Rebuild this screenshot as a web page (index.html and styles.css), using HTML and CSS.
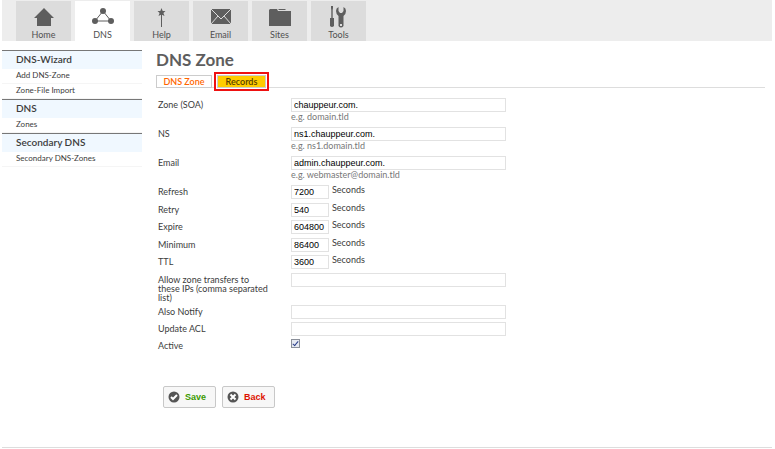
FILE: index.html
```html
<!DOCTYPE html>
<html lang="en">
<head>
    <meta charset="UTF-8">
    <meta name="viewport" content="width=device-width, initial-scale=1.0">
    <title>DNS Zone</title>
    <link rel="stylesheet" href="styles.css">
</head>
<body>

    <nav class="topnav">
        <a href="#">
            <svg viewBox="0 0 22 22"><path d="M11 2 L21 12 H18 V20 H4 V12 H1 Z"/></svg>
            Home
        </a>
        <a href="#" class="active">
            <svg viewBox="0 0 22 22"><path class="line" d="M11 5 L3 15 H19 Z"/><circle cx="11" cy="5" r="3"/><circle cx="3" cy="15" r="3"/><circle cx="19" cy="15" r="3"/></svg>
            DNS
        </a>
        <a href="#">
            <svg viewBox="0 0 22 22"><path d="M10.5 2 L11.7 5 H14.5 L12.4 7 L13.5 10 L11 8.7 V21 H10 V8.7 L7.5 10 L8.6 7 L6.5 5 H9.3 Z"/></svg>
            Help
        </a>
        <a href="#">
            <svg viewBox="0 0 22 22"><path d="M1 3 H21 V18 H1 Z"/><path class="fold" d="M1 3 L11 13 L21 3 M1 18 L8 10 M21 18 L14 10"/></svg>
            Email
        </a>
        <a href="#">
            <svg viewBox="0 0 22 22"><path d="M0 4 L1 3 H8 L9 5 H22 V20 H0 Z"/><path d="M9 3 H16 L17 4 H10 Z"/></svg>
            Sites
        </a>
        <a href="#">
            <svg viewBox="0 0 22 22"><path d="M3 0 H5 V2 L4.7 4 V12 H6 V20 Q4 22 2 20 V12 H3.3 V4 L3 2 Z"/><path fill-rule="evenodd" d="M10.5 1 V5 L12 7 H14 L15.5 5 V1 Q18 2 18 5 Q18 8 15.5 10 V20 Q13 23 10.5 20 V10 Q8 8 8 5 Q8 2 10.5 1 Z M12 18 V20 H14 V18 Z"/></svg>
            Tools
        </a>
    </nav>

    <div class="page">
        <aside class="sidebar">
            <section>
                <h2>DNS-Wizard</h2>
                <a href="#">Add DNS-Zone</a>
                <a href="#">Zone-File Import</a>
            </section>
            <section>
                <h2>DNS</h2>
                <a href="#">Zones</a>
            </section>
            <section>
                <h2>Secondary DNS</h2>
                <a href="#">Secondary DNS-Zones</a>
            </section>
        </aside>

        <main>
            <h1>DNS Zone</h1>
            <div class="tabs">
                <a href="#" class="tab">DNS Zone</a>
                <div class="marked"><a href="#" class="tab selected">Records</a></div>
            </div>

            <form>
                <div class="fields hinted">
                    <div class="row">
                        <label for="soa">Zone (SOA)</label>
                        <div class="control">
                            <input type="text" id="soa" value="chauppeur.com.">
                            <small>e.g. domain.tld</small>
                        </div>
                    </div>
                    <div class="row">
                        <label for="ns">NS</label>
                        <div class="control">
                            <input type="text" id="ns" value="ns1.chauppeur.com.">
                            <small>e.g. ns1.domain.tld</small>
                        </div>
                    </div>
                    <div class="row">
                        <label for="email">Email</label>
                        <div class="control">
                            <input type="text" id="email" value="admin.chauppeur.com.">
                            <small>e.g. webmaster@domain.tld</small>
                        </div>
                    </div>
                </div>

                <div class="fields timing">
                    <div class="row">
                        <label for="refresh">Refresh</label>
                        <div class="control"><input type="text" id="refresh" value="7200"><span>Seconds</span></div>
                    </div>
                    <div class="row">
                        <label for="retry">Retry</label>
                        <div class="control"><input type="text" id="retry" value="540"><span>Seconds</span></div>
                    </div>
                    <div class="row">
                        <label for="expire">Expire</label>
                        <div class="control"><input type="text" id="expire" value="604800"><span>Seconds</span></div>
                    </div>
                    <div class="row">
                        <label for="minimum">Minimum</label>
                        <div class="control"><input type="text" id="minimum" value="86400"><span>Seconds</span></div>
                    </div>
                    <div class="row">
                        <label for="ttl">TTL</label>
                        <div class="control"><input type="text" id="ttl" value="3600"><span>Seconds</span></div>
                    </div>
                </div>

                <div class="fields access">
                    <div class="row">
                        <label for="xfer">Allow zone transfers to these IPs (comma separated list)</label>
                        <div class="control"><input type="text" id="xfer"></div>
                    </div>
                    <div class="row">
                        <label for="notify">Also Notify</label>
                        <div class="control"><input type="text" id="notify"></div>
                    </div>
                    <div class="row">
                        <label for="acl">Update ACL</label>
                        <div class="control"><input type="text" id="acl"></div>
                    </div>
                    <div class="row">
                        <label for="active">Active</label>
                        <div class="control"><input type="checkbox" id="active" checked></div>
                    </div>
                </div>

                <div class="buttons">
                    <button type="button" class="save">
                        <svg viewBox="0 0 12 12"><circle cx="6" cy="6" r="5.5"/><path d="M3 6 L5 8 L9 4"/></svg>
                        Save
                    </button>
                    <button type="button" class="back">
                        <svg viewBox="0 0 12 12"><circle cx="6" cy="6" r="5.5"/><path d="M3.5 3.5 L8.5 8.5 M8.5 3.5 L3.5 8.5"/></svg>
                        Back
                    </button>
                </div>
            </form>
        </main>
    </div>

    <footer></footer>

</body>
</html>
```
FILE: styles.css
```css
*, *::after, *::before{
    margin: 0;
    padding: 0;
    box-sizing: border-box;
}
:root{
    --text: #3c3c3c;
    --icon: #5e5e5e;
    --line: #ddd;
    --input-line: #e2e2e2;
}
body{
    background-color: #fff;
    color: var(--text);
    font-family: Lato, 'Trebuchet MS', sans-serif;
    font-size: 9px;
    padding: 0 3px 0 2px;
}
a{
    color: inherit;
    text-decoration: none;
}

/* top navigation */
.topnav{
    display: flex;
    gap: 4px;
    height: 41px;
    padding: 1px 14px 0;
    background-color: #ededed;
}
.topnav a{
    width: 55px;
    display: flex;
    flex-direction: column;
    align-items: center;
    padding-top: 5px;
    background-color: #dcdcdc;
    color: #505050;
    line-height: 13px;
}
.topnav a.active{
    background-color: #fff;
}
.topnav svg{
    width: 22px;
    height: 22px;
    fill: var(--icon);
}
.topnav .line{
    fill: none;
    stroke: var(--icon);
    stroke-width: 1;
}
.topnav .fold{
    fill: none;
    stroke: #dcdcdc;
    stroke-width: 1;
}

.page{
    display: flex;
    gap: 14px;
}

/* sidebar */
.sidebar{
    width: 140px;
    padding-top: 9px;
}
.sidebar section{
    border-top: 1px solid #777;
}
.sidebar h2{
    height: 18px;
    padding-left: 14px;
    background-color: #f0f8ff;
    font-size: 10px;
    font-weight: 600;
    line-height: 16px;
}
.sidebar a{
    display: block;
    height: 15px;
    padding-left: 14px;
    border-bottom: 1px solid #f5f5f5;
    font-size: 8px;
    line-height: 12px;
}

/* content */
main{
    flex: 1;
    padding: 8px 7px 0 0;
}
h1{
    color: #5e5e5e;
    font-size: 17px;
    line-height: 22px;
}
.tabs{
    display: flex;
    align-items: center;
    gap: 2px;
    height: 18px;
    margin-top: 1px;
    background: linear-gradient(var(--line), var(--line)) 0 15px / 100% 1px no-repeat;
}
.tab{
    display: block;
    width: 56px;
    border: 1px solid #ccc;
    background-color: #fff;
    color: #ff6600;
    font-weight: 600;
    line-height: 11px;
    text-align: center;
}
.marked{
    padding: 1px;
    border: 2px solid #e11;
    background-color: #fff;
}
.tab.selected{
    width: 49px;
    background-color: #fc0;
    color: #553c00;
}

form{
    padding: 8px 0 0 2px;
}
.fields{
    display: grid;
}
.hinted{
    grid-auto-rows: 29px;
}
.timing{
    height: 88px;
    grid-template-rows: repeat(5, 1fr);
}
.access{
    row-gap: 3px;
}
.row{
    display: grid;
    grid-template-columns: 110px minmax(0, 215px);
    column-gap: 23px;
    align-items: start;
}
.row label{
    padding-top: 2px;
    line-height: 9px;
}
.access label{
    min-height: 14px;
}
.control input[type="text"]{
    display: block;
    width: 100%;
    height: 14px;
    padding: 0 2px;
    border: 1px solid var(--input-line);
    background-color: #fff;
    color: #000;
    font-family: 'Liberation Sans', Arial, sans-serif;
    font-size: 9px;
}
.control small{
    display: block;
    color: #777;
    font-size: 9px;
    line-height: 10px;
}
.timing .control{
    display: flex;
    gap: 3px;
    line-height: 10px;
}
.timing .control input[type="text"]{
    width: 38px;
}
.control input[type="checkbox"]{
    appearance: none;
    display: block;
    width: 9px;
    height: 9px;
    border: 1px solid #8a8f99;
    background-color: #e6eaf2;
}
.control input[type="checkbox"]:checked::after{
    content: "";
    display: block;
    width: 3px;
    height: 6px;
    margin-left: 2px;
    border: solid #2b3f8c;
    border-width: 0 1px 1px 0;
    transform: rotate(40deg);
}

.buttons{
    display: flex;
    gap: 6px;
    padding: 33px 0 0 5px;
}
.buttons button{
    display: flex;
    align-items: center;
    gap: 5px;
    width: 53px;
    height: 22px;
    padding-left: 4px;
    border: 1px solid #c8c8c8;
    border-radius: 2px;
    background-color: #f7f7f7;
    font-family: 'Liberation Sans', Arial, sans-serif;
    font-size: 9px;
    font-weight: bold;
}
.buttons svg{
    width: 12px;
    height: 12px;
    fill: #555;
}
.buttons path{
    fill: none;
    stroke: #fff;
    stroke-width: 2;
}
.buttons .save{
    color: #3c9a00;
}
.buttons .back{
    color: #dd1100;
}

footer{
    height: 1px;
    margin-top: 39px;
    background-color: var(--line);
}
```
